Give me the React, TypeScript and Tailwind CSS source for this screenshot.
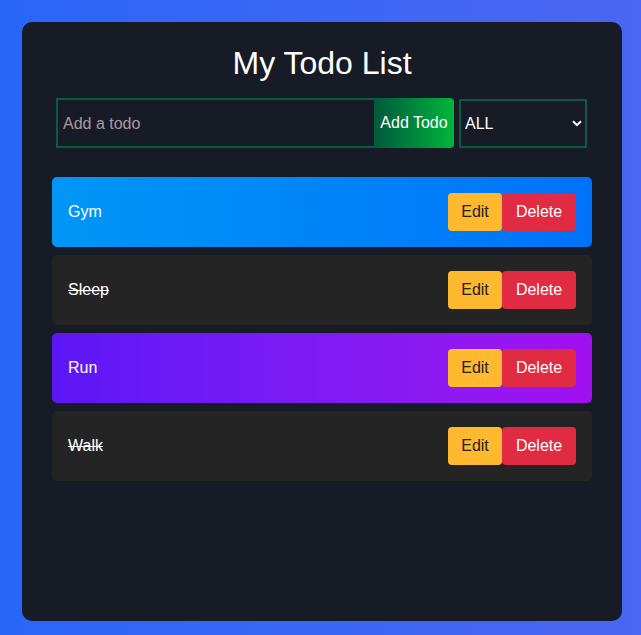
import { useState } from "react";

type Todo = { id: number; text: string; done: boolean };

const initialTodos: Todo[] = [
  { id: 1, text: "Gym", done: false },
  { id: 2, text: "Sleep", done: true },
  { id: 3, text: "Run", done: false },
  { id: 4, text: "Walk", done: true },
];

export default function App() {
  const [todos] = useState<Todo[]>(initialTodos);

  // active items alternate between the blue and purple gradient
  let activeCount = 0;

  return (
    <div
      className="min-h-[635px] w-full bg-gradient-to-r from-[#2866f7] to-[#4a66f2] pl-[22px] pt-[22px]"
      style={{ fontFamily: '"Liberation Sans", Arial, sans-serif' }}
    >
      <div className="h-[599px] w-[600px] rounded-[10px] bg-[#171b26] px-[30px] pt-[21px]">
        <h1 className="text-center text-[32px] leading-[40px] text-white">My Todo List</h1>

        <div className="mt-[15px] flex px-[4px]">
          <div className="flex h-[50px] w-[398px]">
            <input
              placeholder="Add a todo"
              className="h-[50px] flex-1 border-2 border-r-0 border-[#0b5a44] bg-[#171b26] px-[5px] pt-[1px] text-[16px] text-white outline-none placeholder:text-[#a89c9c]"
            />
            <button className="h-[50px] w-[80px] rounded-r-[4px] bg-gradient-to-r from-[#005a3a] to-[#00b53a] text-[16px] text-white">
              Add Todo
            </button>
          </div>
          <div className="relative ml-[5px] mt-[1px] h-[49px] w-[128px]">
            <select className="h-full w-full appearance-none border-2 border-[#0b5a44] bg-[#171b26] pl-[4px] text-[16px] text-white outline-none">
              <option>ALL</option>
              <option>COMPLETED</option>
              <option>INCOMPLETE</option>
            </select>
            <svg
              className="pointer-events-none absolute right-[5px] top-[21px]"
              width="10"
              height="7"
              viewBox="0 0 10 7"
            >
              <path d="M1 1.2 L5 5.2 L9 1.2" stroke="white" strokeWidth="2" fill="none" />
            </svg>
          </div>
        </div>

        <ul className="mt-[29px] flex flex-col gap-[8px]">
          {todos.map((todo) => {
            let bg = "bg-[#242424]";
            if (!todo.done) {
              bg =
                activeCount % 2 === 0
                  ? "bg-gradient-to-r from-[#0096f6] to-[#0072f9]"
                  : "bg-gradient-to-r from-[#5c16f6] to-[#a10ff0]";
              activeCount++;
            }
            return (
              <li
                key={todo.id}
                className={`flex h-[70px] items-center justify-between rounded-[5px] px-[16px] ${bg}`}
              >
                <span className={`text-[16px] text-white ${todo.done ? "line-through" : ""}`}>
                  {todo.text}
                </span>
                <div className="flex">
                  <button className="h-[38px] w-[54px] rounded-[4px] bg-[#ffb92f] text-[16px] text-[#222]">
                    Edit
                  </button>
                  <button className="h-[38px] w-[74px] rounded-[4px] bg-[#e02b43] text-[16px] text-white">
                    Delete
                  </button>
                </div>
              </li>
            );
          })}
        </ul>
      </div>
    </div>
  );
}
